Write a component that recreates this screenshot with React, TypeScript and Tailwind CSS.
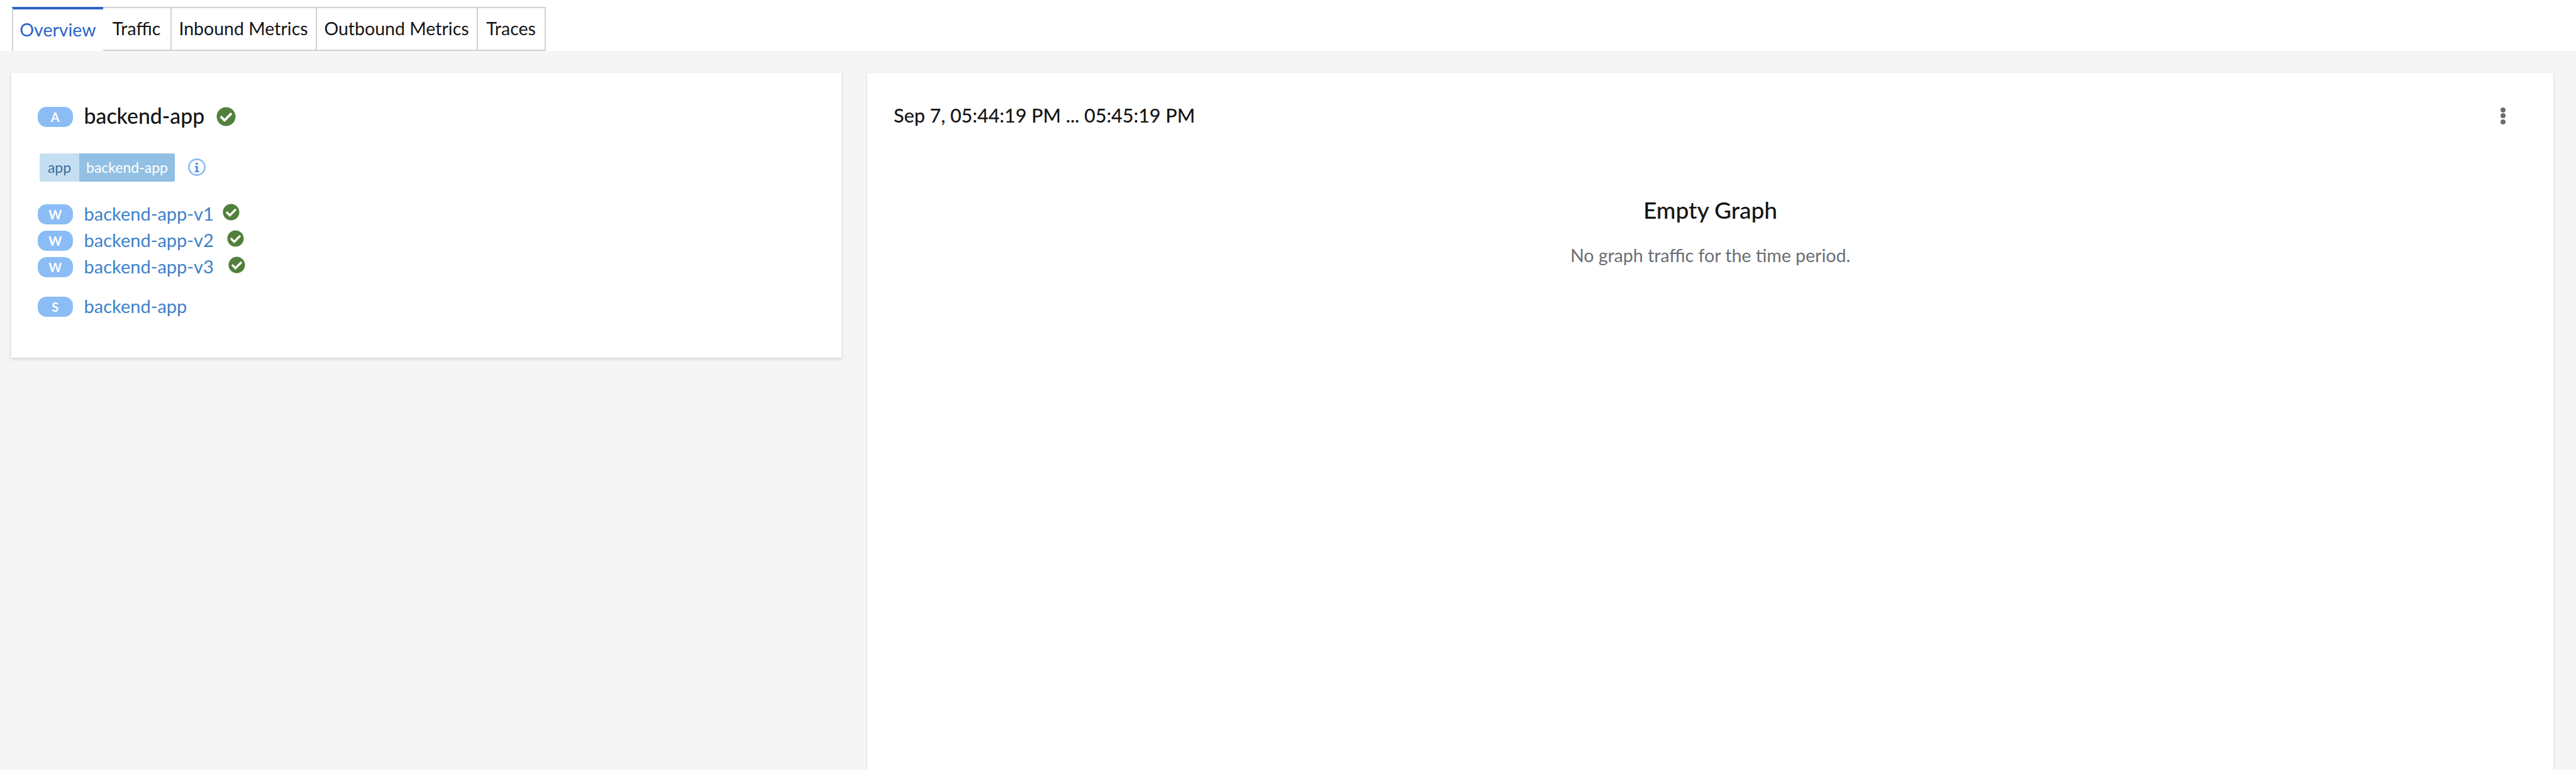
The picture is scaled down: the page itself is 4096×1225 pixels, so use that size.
const font = "font-['Lato','Liberation_Sans',sans-serif]";

const tabs = [
  { label: "Overview", w: "w-[145px]", active: true },
  { label: "Traffic", w: "w-[109px]", active: false },
  { label: "Inbound Metrics", w: "w-[231px]", active: false },
  { label: "Outbound Metrics", w: "w-[256px]", active: false },
  { label: "Traces", w: "w-[108px]", active: false },
];

function Check({ size }: { size: string }) {
  return (
    <svg viewBox="0 0 512 512" className={`${size} shrink-0`}>
      <path
        fill="#52803c"
        d="M504 256c0 137-111 248-248 248S8 393 8 256 119 8 256 8s248 111 248 248zM227.3 387.3l184-184c6.2-6.2 6.2-16.4 0-22.6l-22.6-22.6c-6.2-6.2-16.4-6.2-22.6 0L216 308.1l-70.1-70.1c-6.2-6.2-16.4-6.2-22.6 0l-22.6 22.6c-6.2 6.2-6.2 16.4 0 22.6l104 104c6.2 6.3 16.4 6.3 22.6 0z"
      />
    </svg>
  );
}

function Badge({ letter }: { letter: string }) {
  return (
    <span className="flex h-[31.5px] w-[55.5px] shrink-0 items-center justify-center rounded-[14px] bg-[#8bbcf5] text-[20px] font-bold leading-none text-white">
      {letter}
    </span>
  );
}

function Row({ letter, name, gap }: { letter: string; name: string; gap?: string }) {
  return (
    <div className="flex h-[31.5px] items-center">
      <Badge letter={letter} />
      <span className="-mt-[3px] ml-[18px] text-[29px] leading-[31.5px] text-[#3d82c9]">{name}</span>
      {gap && (
        <span className={`-mt-[6px] ${gap}`}>
          <Check size="w-[27px] h-[27px]" />
        </span>
      )}
    </div>
  );
}

export default function App() {
  return (
    <div className={`flex h-[1225px] w-full flex-col overflow-hidden bg-[#f5f5f5] ${font}`}>
      <div className="flex h-[80.5px] shrink-0 items-start bg-white pl-[18.5px] pt-[10.5px]">
        {tabs.map((t) => (
          <div
            key={t.label}
            className={`flex h-[70px] items-center justify-center text-[28.5px] ${t.w} ${
              t.active
                ? "border-l-2 border-t-[4px] border-l-[#d2d2d2] border-t-[#2b64c6] bg-white text-[#2b64c6]"
                : "border-2 border-l-0 border-[#d2d2d2] text-[#151515]"
            }`}
          >
            {t.label}
          </div>
        ))}
      </div>
      <div className="flex min-h-0 flex-1 items-start gap-[41px] pl-[17.5px] pr-[36px] pt-[35px]">
        <div className="h-[453.5px] w-[1320.5px] shrink-0 bg-white pl-[42.5px] pt-[54.5px] shadow-[0_2px_5px_rgba(3,3,3,0.16)]">
          <div className="flex h-[31.5px] items-center">
            <Badge letter="A" />
            <span className="-mt-[2px] ml-[18px] text-[33.8px] font-medium leading-[31.5px] text-[#151515]">backend-app</span>
            <span className="ml-[19px]">
              <Check size="w-[31px] h-[31px]" />
            </span>
          </div>
          <div className="ml-[3px] mt-[42px] flex items-center">
            <div className="flex h-[45.5px] overflow-hidden rounded-[3px] text-[23px]">
              <span className="flex w-[63px] items-center justify-center bg-[#c5dff2] text-[#3b6f9b]">app</span>
              <span className="flex w-[152px] items-center justify-center bg-[#92c0e4] text-white">backend-app</span>
            </div>
            <svg viewBox="0 0 28 28" className="ml-[21px] h-[28px] w-[28px]">
              <circle cx="14" cy="14" r="12.6" fill="none" stroke="#8bbcf5" strokeWidth="2.6" />
              <circle cx="14" cy="8.4" r="2" fill="#4f93e0" />
              <path d="M10.800 12h4.900v8h2v2h-7.200v-2h2v-6h-1.700z" fill="#4f93e0" />
            </svg>
          </div>
          <div className="mt-[36px] flex flex-col gap-[10.5px]">
            <Row letter="W" name="backend-app-v1" gap="ml-[14px]" />
            <Row letter="W" name="backend-app-v2" gap="ml-[21px]" />
            <Row letter="W" name="backend-app-v3" gap="ml-[23px]" />
          </div>
          <div className="mt-[31.5px]">
            <Row letter="S" name="backend-app" />
          </div>
        </div>
        <div className="relative flex h-[1200px] flex-1 flex-col bg-white pl-[42px] shadow-[0_1px_4px_rgba(3,3,3,0.12)]">
          <div className="mt-[49px] text-[30.5px] font-medium leading-[36px] text-[#151515]">
            Sep 7, 05:44:19 PM ... 05:45:19 PM
          </div>
          <div className="absolute right-[76px] top-[55px] flex flex-col gap-[1.6px]">
            <span className="h-[8px] w-[8px] rounded-full bg-[#6a6e73]" />
            <span className="h-[8px] w-[8px] rounded-full bg-[#6a6e73]" />
            <span className="h-[8px] w-[8px] rounded-full bg-[#6a6e73]" />
          </div>
          <div className="-ml-[42px] mt-[113px] flex flex-col items-center">
            <div className="text-[37px] font-medium leading-[40px] text-[#151515]">Empty Graph</div>
            <div className="mt-[34px] text-[28.5px] leading-[36px] text-[#6a6e73]">
              No graph traffic for the time period.
            </div>
          </div>
        </div>
      </div>
    </div>
  );
}
